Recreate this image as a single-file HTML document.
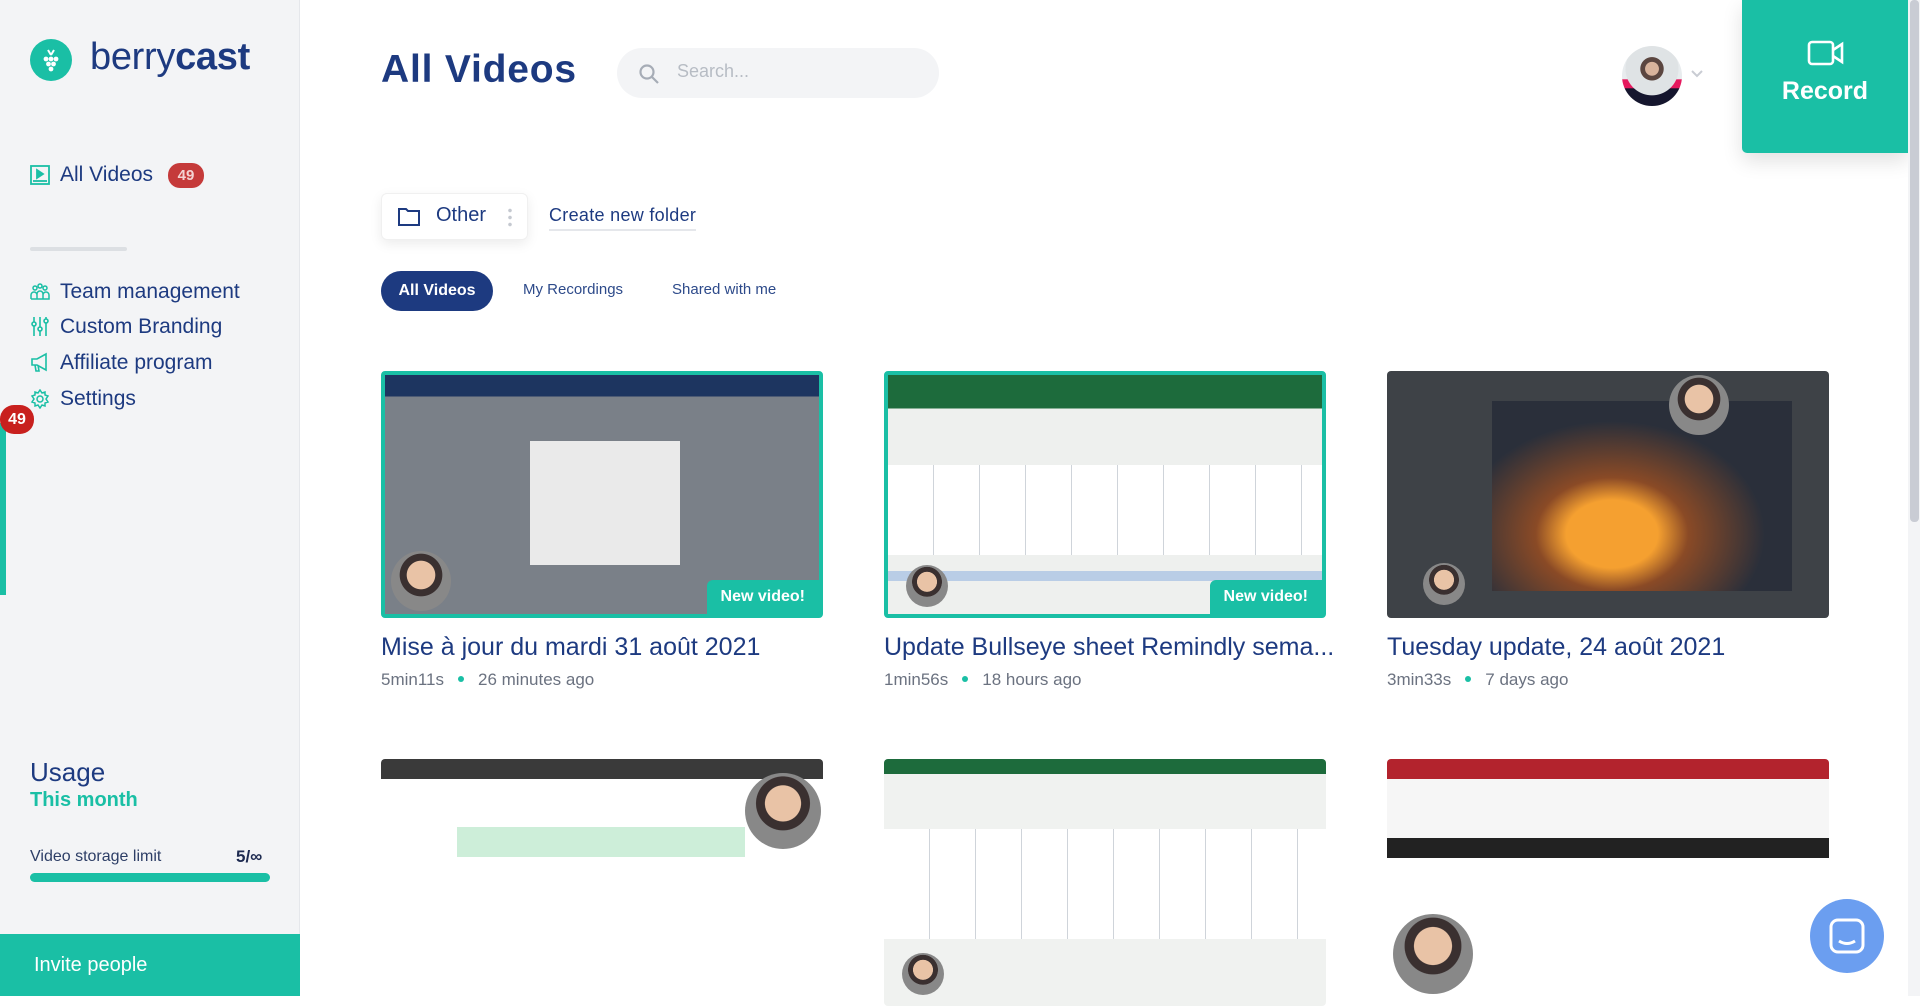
<!DOCTYPE html>
<html><head><meta charset="utf-8"><style>
*{box-sizing:border-box;margin:0;padding:0}
body{width:1920px;height:996px;overflow:hidden;background:#fff;font-family:"Liberation Sans",sans-serif;color:#1d3a80;position:relative}
.sb{position:absolute;left:0;top:0;width:300px;height:996px;background:#f3f4f6;border-right:1px solid #e5e7eb}
.abs{position:absolute}
.nav{position:absolute;left:60px;font-size:21px;color:#1d3a80}
.ic{position:absolute;left:30px;width:20px;height:20px}
.card{position:absolute;width:442px}
.th{width:442px;height:247px;border-radius:4px;overflow:hidden;position:relative;background:#6f7479}
.th.b{border:4px solid #1abfa5}
.ttl{font-size:25px;color:#1d3a80;margin-top:15px;white-space:nowrap}
.meta{font-size:17px;color:#6b7280;margin-top:8px}
.meta i{display:inline-block;width:6px;height:6px;border-radius:50%;background:#1abfa5;margin:0 14px 3px;vertical-align:middle}
.nv{position:absolute;right:0;bottom:0;background:#1abfa5;color:#fff;font-weight:bold;font-size:16px;padding:8px 14px;border-radius:6px 0 0 0}
.face{position:absolute;border-radius:50%;background:radial-gradient(circle at 50% 40%,#e9c3a6 0 30%,#3a3030 31% 45%,#888 46%)}
</style></head><body>
<div class="sb">
 <div class="abs" style="left:30px;top:39px;width:42px;height:42px;border-radius:50%;background:#1abfa5"></div>
 <svg class="abs" style="left:38px;top:46px" width="26" height="28" viewBox="0 0 26 28" fill="#fff"><circle cx="8" cy="13" r="2.4"/><circle cx="13" cy="13" r="2.4"/><circle cx="18" cy="13" r="2.4"/><circle cx="10.5" cy="18" r="2.4"/><circle cx="15.5" cy="18" r="2.4"/><circle cx="13" cy="23" r="2.4"/><path d="M13 9 L10 4 M13 9 L16 4" stroke="#fff" stroke-width="2"/></svg>
 <div class="abs" style="left:90px;top:36px;font-size:38px;color:#1d3a80;letter-spacing:-0.3px">berry<b>cast</b></div>
 <svg class="ic" style="top:165px" viewBox="0 0 20 20" fill="none" stroke="#1abfa5" stroke-width="1.8"><rect x="1" y="1" width="18" height="18"/><path d="M7 5 L13 9 L7 13Z" fill="#1abfa5"/><path d="M3 16h14"/></svg>
 <div class="nav" style="top:163px">All Videos</div>
 <div class="abs" style="left:168px;top:163px;width:36px;height:25px;border-radius:12px;background:#c53a3a;color:#f3d3d3;font-size:15px;font-weight:bold;text-align:center;line-height:25px">49</div>
 <div class="abs" style="left:30px;top:247px;width:97px;height:4px;border-radius:2px;background:#dcdfe3"></div>
 <svg class="ic" style="top:282px" viewBox="0 0 20 20" fill="none" stroke="#1abfa5" stroke-width="1.5"><circle cx="5" cy="6" r="2"/><circle cx="10" cy="4" r="2"/><circle cx="15" cy="6" r="2"/><path d="M1 17v-4a3 3 0 0 1 6 0M7 17v-5a3 3 0 0 1 6 0v5M13 17v-4a3 3 0 0 1 6 0v4H1"/></svg>
 <div class="nav" style="top:280px">Team management</div>
 <svg class="ic" style="top:316px" viewBox="0 0 20 20" fill="none" stroke="#1abfa5" stroke-width="1.6"><path d="M4 1v19M10 1v19M16 1v19"/><circle cx="4" cy="8" r="2" fill="#f3f4f6"/><circle cx="10" cy="13" r="2" fill="#f3f4f6"/><circle cx="16" cy="5" r="2" fill="#f3f4f6"/></svg>
 <div class="nav" style="top:315px">Custom Branding</div>
 <svg class="ic" style="top:352px" viewBox="0 0 20 20" fill="none" stroke="#1abfa5" stroke-width="1.6"><path d="M2 7h5l9-5v16l-9-5H2z M5 13l1 6h3l-1-6"/></svg>
 <div class="nav" style="top:351px">Affiliate program</div>
 <svg class="ic" style="top:389px" viewBox="0 0 20 20" fill="none" stroke="#1abfa5" stroke-width="1.5"><circle cx="10" cy="10" r="3"/><path d="M10 1l2 3 3-1 0 3 3 1-2 3 2 3-3 1 0 3-3-1-2 3-2-3-3 1 0-3-3-1 2-3-2-3 3-1 0-3 3 1z"/></svg>
 <div class="nav" style="top:387px">Settings</div>
 <div class="abs" style="left:0;top:423px;width:6px;height:172px;background:#1abfa5"></div>
 <div class="abs" style="left:0;top:405px;width:34px;height:29px;border-radius:14px;background:#c8201e;color:#fff;font-weight:bold;font-size:16px;text-align:center;line-height:29px">49</div>
 <div class="abs" style="left:30px;top:757px;font-size:26px">Usage</div>
 <div class="abs" style="left:30px;top:789px;font-size:20px;color:#1abfa5;font-weight:bold">This month</div>
 <div class="abs" style="left:30px;top:848px;font-size:16px;color:#2d3e66">Video storage limit</div>
 <div class="abs" style="left:236px;top:847px;font-size:17px;font-weight:bold;color:#1d2a50">5/∞</div>
 <div class="abs" style="left:30px;top:873px;width:240px;height:9px;border-radius:5px;background:#1abfa5"></div>
 <div class="abs" style="left:0;top:934px;width:300px;height:62px;background:#1abfa5;color:#fff;font-size:20px;padding:20px 0 0 34px">Invite people</div>
</div>

<div class="abs" style="left:381px;top:48px;font-size:39px;font-weight:bold;color:#1d3a80;letter-spacing:0.8px">All Videos</div>
<div class="abs" style="left:617px;top:48px;width:322px;height:50px;border-radius:25px;background:#f3f4f6"></div>
<svg class="abs" style="left:638px;top:63px" width="22" height="22" viewBox="0 0 22 22" fill="none" stroke="#a6acb6" stroke-width="2.2"><circle cx="9" cy="9" r="6.5"/><path d="M14 14l6 6"/></svg>
<div class="abs" style="left:677px;top:61px;font-size:18px;color:#b7bcc4">Search...</div>
<div class="abs" style="left:1622px;top:46px;width:60px;height:60px;border-radius:50%;background:radial-gradient(circle at 50% 38%,#d8b39c 0 14%,#5b4640 15% 24%,#dfe3e5 25% 55%,transparent 56%),linear-gradient(#e8ecee 55%,#e5195e 56% 70%,#15162e 71%)"></div>
<svg class="abs" style="left:1691px;top:70px" width="12" height="8" viewBox="0 0 12 8" fill="none" stroke="#c9ccd3" stroke-width="2"><path d="M1 1l5 5 5-5"/></svg>
<div class="abs" style="left:1742px;top:0;width:166px;height:153px;background:#1abfa5;border-radius:0 0 0 5px;box-shadow:0 8px 20px rgba(0,0,0,.12)"></div>
<svg class="abs" style="left:1807px;top:40px" width="38" height="26" viewBox="0 0 38 26" fill="none" stroke="#fff" stroke-width="2.6"><rect x="2" y="2" width="24" height="22" rx="3"/><path d="M26 10l9-6v18l-9-6"/></svg>
<div class="abs" style="left:1742px;top:77px;width:166px;text-align:center;color:#fff;font-size:25px;font-weight:bold">Record</div>
<div class="abs" style="left:1908px;top:0;width:12px;height:996px;background:#f3f4f6"></div>
<div class="abs" style="left:1910px;top:0;width:9px;height:522px;background:#c9ccd4;border-radius:4px"></div>

<div class="abs" style="left:381px;top:193px;width:147px;height:47px;background:#fff;border-radius:6px;box-shadow:0 4px 12px rgba(0,0,0,.08);border:1px solid #f0f0f0"></div>
<svg class="abs" style="left:398px;top:206px" width="22" height="20" viewBox="0 0 22 20" fill="none" stroke="#1d3a80" stroke-width="2"><path d="M1 3h7l2 2h11v14H1z"/></svg>
<div class="abs" style="left:436px;top:204px;font-size:20px;color:#1d3a80">Other</div>
<div class="abs" style="left:508px;top:207px;width:4px;height:20px;background:radial-gradient(circle,#c5c9d0 1.6px,transparent 2px) 0 0/4px 7px"></div>
<div class="abs" style="left:549px;top:205px;font-size:18px;color:#1d3a80;border-bottom:2px solid #e5e7eb;padding-bottom:3px;letter-spacing:0.3px">Create new folder</div>
<div class="abs" style="left:381px;top:271px;width:112px;height:40px;border-radius:20px;background:#1d3a80;color:#fff;font-weight:bold;font-size:16px;text-align:center;line-height:40px">All Videos</div>
<div class="abs" style="left:523px;top:281px;font-size:15px;color:#2d4a8a">My Recordings</div>
<div class="abs" style="left:672px;top:281px;font-size:15px;color:#2d4a8a">Shared with me</div>

<div class="card" style="left:381px;top:371px">
 <div class="th b" style="background:linear-gradient(#1d3560 0 9%,#7a8088 9%)"><div class="abs" style="left:145px;top:66px;width:150px;height:124px;background:#eaeaea"></div><div class="face" style="left:6px;top:176px;width:60px;height:60px"></div><div class="nv">New video!</div></div>
 <div class="ttl">Mise à jour du mardi 31 août 2021</div>
 <div class="meta">5min11s<i></i>26 minutes ago</div>
</div>
<div class="card" style="left:884px;top:371px">
 <div class="th b" style="background:linear-gradient(#1d6b3c 0 14%,#eef0ee 14%)"><div class="abs" style="left:0;top:90px;width:442px;height:90px;background:repeating-linear-gradient(90deg,#fff 0 45px,#cfd4da 45px 46px)"></div><div class="abs" style="left:0;top:196px;width:442px;height:10px;background:#b9cde6"></div><div class="face" style="left:18px;top:190px;width:42px;height:42px"></div><div class="nv">New video!</div></div>
 <div class="ttl">Update Bullseye sheet Remindly sema...</div>
 <div class="meta">1min56s<i></i>18 hours ago</div>
</div>
<div class="card" style="left:1387px;top:371px">
 <div class="th" style="background:#3e4247"><div class="abs" style="left:105px;top:30px;width:300px;height:190px;background:radial-gradient(ellipse at 40% 70%,#f5a030 0 18%,#8a4a26 30%,#2a2f3a 60%)"></div><div class="face" style="left:282px;top:4px;width:60px;height:60px"></div><div class="face" style="left:36px;top:192px;width:42px;height:42px"></div></div>
 <div class="ttl">Tuesday update, 24 août 2021</div>
 <div class="meta">3min33s<i></i>7 days ago</div>
</div>
<div class="card" style="left:381px;top:759px"><div class="th" style="background:linear-gradient(#3a3a3a 0 8%,#fff 8%)"><div class="abs" style="left:76px;top:68px;width:288px;height:30px;background:#cdeed9"></div><div class="face" style="left:364px;top:14px;width:76px;height:76px"></div></div></div>
<div class="card" style="left:884px;top:759px"><div class="th" style="background:linear-gradient(#1d6b3c 0 6%,#f0f2f0 6%)"><div class="abs" style="left:0;top:70px;width:442px;height:110px;background:repeating-linear-gradient(90deg,#fff 0 45px,#cfd4da 45px 46px)"></div><div class="face" style="left:18px;top:194px;width:42px;height:42px"></div></div></div>
<div class="card" style="left:1387px;top:759px"><div class="th" style="background:linear-gradient(#b3232d 0 8%,#f6f6f6 8% 32%,#222 32% 40%,#fff 40%)"><div class="face" style="left:6px;top:155px;width:80px;height:80px"></div></div></div>
<div class="abs" style="left:1810px;top:899px;width:74px;height:74px;border-radius:50%;background:#6b9ef0"></div>
<svg class="abs" style="left:1828px;top:917px" width="38" height="38" viewBox="0 0 38 38" fill="none" stroke="#fff" stroke-width="3"><rect x="3" y="3" width="32" height="32" rx="7"/><path d="M11 24q8 5 16 0"/></svg>
</body></html>
